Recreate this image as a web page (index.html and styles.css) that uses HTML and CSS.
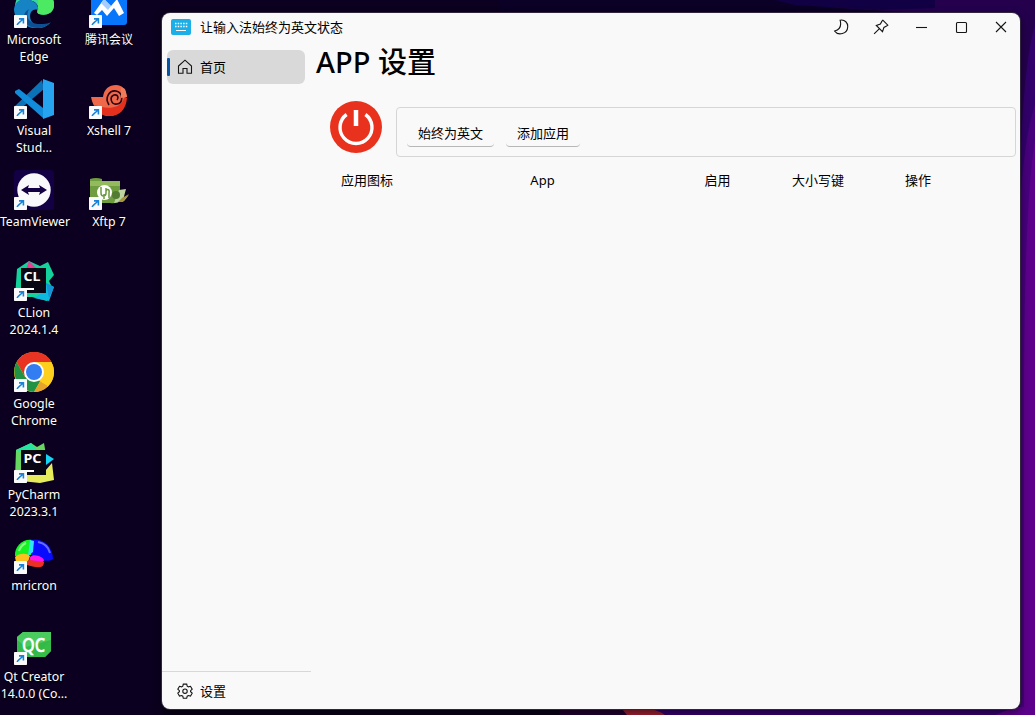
FILE: index.html
```html
<!DOCTYPE html>
<html lang="zh-CN">
<head>
<meta charset="utf-8">
<title>让输入法始终为英文状态</title>
<link rel="stylesheet" href="styles.css">
</head>
<body>
<svg class="defs" width="0" height="0">
  <symbol id="shortcut" viewBox="0 0 13 13"><rect width="13" height="13" rx=".7" fill="#fafafa"/><path d="M3.2 10C3.5 8 5.400 7.800 8.800 4.300M5 3.900h4.400v4.500" fill="none" stroke="#1683d8" stroke-width="1.600"/></symbol>
</svg>
<main class="desktop">
  <svg class="wallpaper" viewBox="0 0 1035 715">
    <rect width="1035" height="715" fill="#0b001f"/>
    <path d="M500 0h535v715H500z" fill="#24004d"/>
    <path d="M500 0h280l60 8 80 5H500z" fill="#0b0025"/>
    <path d="M775 0h160v8l-60 2-80-5z" fill="#110044"/>
    <path d="M1035 25q-12 40-15 150v540h15z" fill="#31006a"/>
    <path d="M1035 105q-12 35-15 110v500h15z" fill="#46007b"/>
    <path d="M1035 140q-10 60-11 230v345h11z" fill="#5c008b"/>
    <path d="M162 707h460v8H162z" fill="#090018"/>
    <path d="M560 709h70v6h-70z" fill="#20002f"/>
    <path d="M622 709h35l8 6h-38z" fill="#9b2031"/>
    <path d="M652 709h363l-20 6H668z" fill="#34006d"/>
    <path d="M1015 707h20v8h-40z" fill="#5c008b"/>
  </svg>
  <section class="icons">
    <div class="item">
      <svg class="pic" viewBox="0 0 40 40"><path d="M1 18C2 5 13-1 24 1c11 2 17 10 16 17-1 8-9 10-15 8-3-1-1-4-1-7-1-6-10-9-16-5-4 2-6 4-7 4z" fill="#3ad4a4"/><path d="M24 1c11 2 17 10 16 17-1 8-9 10-15 8-3-1-1-4-1-7z" fill="#4bea62"/><path d="M0 21c1-8 8-12 16-9 6 2 9 6 8 10-8-3-11 9-4 14 6 4 12 1 17-2-7 8-18 8-26 3C4 34 0 28 0 21z" fill="#1683c5"/><path d="M15 21c-5 10 2 18 21 14-6 6-15 6-21 3-7-4-7-13 0-17z" fill="#0c4f94"/></svg>
      <svg class="link"><use href="#shortcut"/></svg>
      <p class="name">Microsoft<br>Edge</p>
    </div>
    <div class="item">
      <svg class="pic" viewBox="0 0 40 40"><rect x="2" y="1" width="36" height="36" rx="3" fill="#0876fa"/><path d="M5 25 15 11l7 7 6-7 7 14-5 3-5-8-7 8-5-6-5 5z" fill="#fff"/><path d="m15 11 7 7-3 4-7-7z" fill="#a5cbff"/></svg>
      <svg class="link"><use href="#shortcut"/></svg>
      <p class="name cjk">腾讯会议</p>
    </div>
    <div class="item">
      <svg class="pic" viewBox="0 0 40 40"><path d="M1 27 28 1l2 9L5 31l-4-2z" fill="#0b72b8"/><path d="m1 12 4-2 24 19v10L1 14z" fill="#118cda"/><path d="m29 0 11 4v32l-11 4z" fill="#27a4ef"/></svg>
      <svg class="link"><use href="#shortcut"/></svg>
      <p class="name">Visual<br>Stud...</p>
    </div>
    <div class="item">
      <svg class="pic" viewBox="0 0 40 40"><path d="M2 18h12c1-8 6-12 13-12 6 0 9 4 10 7l1 5-3 1c0 10-5 18-15 18C11 37 4 29 2 18z" fill="#ef6849"/><path d="M5 26c8 2 13 4 20 2 6-1 9-5 10-9h3c-1 11-7 18-17 18C12 37 7 32 5 26z" fill="#e5301e"/><path d="M20 26c-5-8 1-15 7-14 8 2 7 12 1 13-6 1-8-7-3-9 4-1 5 3 3 5" fill="none" stroke="#250615" stroke-width="1.600"/><path d="m32 8 4 2 2 8-6 1z" fill="#ef7b59"/></svg>
      <svg class="link"><use href="#shortcut"/></svg>
      <p class="name">Xshell 7</p>
    </div>
    <div class="item">
      <svg class="pic" viewBox="0 0 40 40"><rect width="40" height="40" rx="4" fill="#130044"/><circle cx="20" cy="20" r="16.700" fill="#f9f9fb"/><path d="m7 20 8-5-1 3h12l-1-3 8 5-8 5 1-3H14l1 3z" fill="#130044"/></svg>
      <svg class="link"><use href="#shortcut"/></svg>
      <p class="name wide">TeamViewer</p>
    </div>
    <div class="item">
      <svg class="pic" viewBox="0 0 40 40"><path d="M1 9q6-2 12 0v2h18v20q-3 3-10 2H1z" fill="#709d40"/><path d="M1 11h30v5H1z" fill="#93ba5d"/><path d="m30 20 7-1-3 11 6-5-5 6-10 2z" fill="#bed5a0"/><path d="m33 28 7-4-6 8h-5z" fill="#a79639"/><circle cx="27" cy="25" r="4" fill="#547b34"/><circle cx="15.500" cy="22.500" r="7.500" fill="#fff"/><path d="M12 17v6c0 4 5 4 5 0v-1c0-4 4-3 3 1v5M17 22v-4M15 24v5" fill="none" stroke="#6d9840" stroke-width="1.500"/></svg>
      <svg class="link"><use href="#shortcut"/></svg>
      <p class="name">Xftp 7</p>
    </div>
    <div class="item solo">
      <svg class="pic" viewBox="0 0 40 40"><path d="m3 8 12-8 11 5 8-4 6 13-5 6 3 6-5 14-15-4-17 0z" fill="#14d29b"/><path d="m15 0 8 8H12z" fill="#ed3b93"/><path d="m32 22 8 4-5 14-15-3 12-8z" fill="#0db8de"/><path d="m32 22 8 4-5 11z" fill="#1692d5"/><rect x="7" y="7" width="25" height="25" fill="#080713"/><path d="M12 28h8" stroke="#fff" stroke-width="2"/><text x="9.500" y="20" textLength="17" lengthAdjust="spacingAndGlyphs" class="logo">CL</text></svg>
      <svg class="link"><use href="#shortcut"/></svg>
      <p class="name">CLion<br>2024.1.4</p>
    </div>
    <div class="item solo">
      <svg class="pic" viewBox="0 0 40 40"><circle cx="20" cy="20" r="20" fill="#ffcf1e"/><path d="M2.700 10C11-4 31-3 37.300 10H20L11 25z" fill="#e93423"/><path d="M2.700 10C-4 22 4 38 20 40l9-16-18 1z" fill="#229345"/><path d="m29 25-9 15c6 0 11-3 14-6L24 28z" fill="#e5a42c"/><path d="M20 10h17.300a20 20 0 0 1-3 24l-10-6 5-5-1-9z" fill="#ffcf1e"/><circle cx="20" cy="20" r="10" fill="#fff"/><circle cx="20" cy="20" r="8" fill="#317df1"/></svg>
      <svg class="link"><use href="#shortcut"/></svg>
      <p class="name">Google<br>Chrome</p>
    </div>
    <div class="item solo">
      <svg class="pic" viewBox="0 0 40 40"><path d="m2 7 15-7 6 4 7-4 2 12v20L1 35z" fill="#66d760"/><path d="m2 7 15-7 7 8H5z" fill="#25e6a0"/><path d="m32 11 8 5-8 6z" fill="#16d4f3"/><path d="m31 28 7-8 2 17-14 3-19-2 2-8z" fill="#e6ec5b"/><rect x="7" y="7" width="25" height="25" fill="#080713"/><path d="M12 28h8" stroke="#fff" stroke-width="2"/><text x="9.500" y="20" textLength="18" lengthAdjust="spacingAndGlyphs" class="logo">PC</text></svg>
      <svg class="link"><use href="#shortcut"/></svg>
      <p class="name">PyCharm<br>2023.3.1</p>
    </div>
    <div class="item solo">
      <svg class="pic" viewBox="0 0 40 40"><path d="M1 22C0 12 10 4 18 6l-1 15z" fill="#16f323"/><path d="M17 6c11-3 22 6 22 19-5 4-14 1-22-4z" fill="#080bfc"/><path d="m16 6 4 1-1 11-5 4z" fill="#2de6f4"/><path d="M1 23c4-4 12-4 15-1l-2 6H2z" fill="#ffc01f"/><path d="M16 23c4-4 14 0 14 4l-4 3-11-3z" fill="#fa16f0"/><path d="m11 28 5-2 14 2c0 8-10 5-17 3z" fill="#ed3024"/><path d="M5 17q2-6 7-8" fill="none" stroke="#89ff85" stroke-width="2"/><path d="M24 8q10 2 12 11" fill="none" stroke="#666bff" stroke-width="2"/></svg>
      <svg class="link"><use href="#shortcut"/></svg>
      <p class="name">mricron</p>
    </div>
    <div class="item solo">
      <svg class="pic" viewBox="0 0 40 40"><path d="M9 7h28v19l-6 6H3V12z" fill="#32b947"/><path d="M9 7h28v8L12 22 3 15v-3z" fill="#4acb5d"/><path d="m20 32 17-17v11l-6 6z" fill="#35bc49"/><text x="8" y="26.500" textLength="23" lengthAdjust="spacingAndGlyphs" class="qc">QC</text></svg>
      <svg class="link"><use href="#shortcut"/></svg>
      <p class="name">Qt Creator<br>14.0.0 (Co...</p>
    </div>
  </section>

  <section class="window">
    <header class="titlebar">
      <svg class="keyboard" viewBox="0 0 20 16"><rect width="20" height="16" rx="2" fill="#1caee6"/><path d="M4 4.500h12.500M4 7.500h12.500" stroke="#fff" stroke-width="1.500" stroke-dasharray="1.500 1.200"/><path d="M5 11.500h10" stroke="#fff"/></svg>
      <h1 class="title">让输入法始终为英文状态</h1>
      <div class="controls">
        <svg viewBox="0 0 16 16"><path d="M7.100 1.200C12 .3 15 4 14.700 8c-.3 7-9.500 9-13 4.100C5.500 10.900 9 8 7.100 1.200z"/></svg>
        <svg viewBox="0 0 16 16"><path d="m9.800 1.200 5 5-1.200.9-2.700 1.400-1.400 4.200-6.200-6.200 4.100-1.400 1.400-2.700zM6.200 9.800l-5.100 5"/></svg>
        <svg viewBox="0 0 16 16"><path d="M3 8.500h11"/></svg>
        <svg viewBox="0 0 16 16"><rect x="3.500" y="3.500" width="10" height="10" rx="1"/></svg>
        <svg viewBox="0 0 16 16"><path d="m3 3 10 10M13 3 3 13"/></svg>
      </div>
    </header>
    <div class="body">
      <nav class="sidebar">
        <a class="nav active"><svg class="navicon" viewBox="0 0 16 16"><path d="M1.500 7 8 1.200 14.500 7v7.300H10V9.500H6v4.800H1.500z"/></svg>首页</a>
        <a class="nav settings"><svg class="navicon" viewBox="0 0 16 16"><path d="m6.300 1.100 3.400 0 .5 2.100 1.200.7 2.100-.6 1.700 2.900-1.600 1.500v1l1.600 1.500-1.700 2.900-2.100-.6-1.200.7-.5 2.100H6.300l-.5-2.100-1.200-.7-2.100.6L.8 10.200l1.600-1.500v-1L.8 6.200l1.700-2.900 2.100.6 1.200-.7z"/><circle cx="8" cy="8.200" r="2.200"/></svg>设置</a>
      </nav>
      <article class="content">
        <h2 class="heading">APP 设置</h2>
        <div class="tools">
          <svg class="power" viewBox="0 0 52 52"><circle cx="26" cy="26" r="26" fill="#e9321e"/><path d="M16.600 13.500A16 16 0 1 0 35.400 13.500" fill="none" stroke="#fff" stroke-width="3.400"/><path d="M26 9v16" stroke="#fff" stroke-width="4.500"/></svg>
          <div class="bar"><button class="button">始终为英文</button><button class="button">添加应用</button></div>
        </div>
        <div class="table"><span>应用图标</span><span>App</span><span>启用</span><span>大小写键</span><span>操作</span></div>
      </article>
    </div>
  </section>
</main>
</body>
</html>
```
FILE: styles.css
```css
* { box-sizing: border-box; }
body { margin: 0; font-family: "Noto Sans", "Noto Sans CJK SC", sans-serif; }
.defs { position: absolute; }
.desktop { position: relative; width: 1035px; height: 715px; overflow: hidden; background: #0b001f; }
.wallpaper { position: absolute; inset: 0; width: 100%; height: 100%; }
.icons { position: relative; width: 150px; margin-left: -4px; margin-top: -12px; display: grid; grid-template-columns: 75px 75px; grid-auto-rows: 91px; }
.item { position: relative; display: flex; flex-direction: column; align-items: center; }
.solo { grid-column: 1; }
.pic { width: 40px; height: 40px; flex: none; }
.link { position: absolute; left: 18px; top: 27px; width: 13px; height: 13px; }
.name { margin: 3px 0 0; padding-left: 1px; color: #fff; font-size: 12.3px; line-height: 17px; text-align: center; white-space: nowrap; text-shadow: 0 1px 2px #000; }
.wide { padding-left: 3px; }
.cjk { margin-top: 2px; font-family: "Noto Sans CJK SC", sans-serif; font-size: 12px; }
.logo { font: bold 13px "Noto Sans", sans-serif; fill: #fff; }
.qc { font: 500 19px "Noto Sans", sans-serif; fill: #fff; stroke: #fff; stroke-width: .5; }
.window { position: absolute; left: 162px; top: 13px; width: 858px; height: 696px; display: flex; flex-direction: column; border-radius: 8px; background: #f9f9f9; color: #000; font-size: 13px; box-shadow: 0 0 0 1px #32263e, 0 3px 9px #0008; }
.titlebar { height: 28px; flex: none; display: flex; align-items: center; padding-left: 9px; }
.keyboard { width: 20px; height: 16px; }
.title { margin: 0 0 1px 9px; font: 13px/20px "Noto Sans CJK SC", sans-serif; }
.controls { margin-left: auto; display: flex; gap: 24px; padding-right: 11px; }
.controls svg, .navicon { width: 16px; height: 16px; fill: none; stroke: #151515; stroke-width: 1.1; }
.body { flex: 1; display: flex; min-height: 0; }
.sidebar { width: 149px; display: flex; flex-direction: column; justify-content: space-between; padding-top: 9px; }
.nav { height: 34px; display: flex; align-items: center; gap: 7px; padding-left: 7px; font-family: "Noto Sans CJK SC", sans-serif; line-height: 20px; }
.active { width: 138px; margin-left: 5px; border-radius: 6px; background: #d9d9d9; }
.active::before { content: ""; width: 3px; height: 18px; margin: 0 0 0 -7px; border-radius: 1px; background: #0455a5; }
.settings { height: 38px; padding-left: 15px; border-top: 1px solid #d8d8d8; }
.content { flex: 1; padding-right: 4px; }
.heading { height: 60px; margin: 0 0 0 5px; font-size: 29px; font-weight: 500; line-height: 41px; white-space: nowrap; }
.tools { display: flex; gap: 14px; padding-left: 19px; }
.power { width: 52px; height: 52px; flex: none; }
.bar { flex: 1; height: 50px; margin-top: 6px; padding: 11px 10px; display: flex; gap: 12px; border: 1px solid #d6d6d6; border-radius: 4px; }
.button { height: 28px; padding: 0 11px; border: 0; border-bottom: 1px solid #b7b7b7; border-radius: 4px; background: #f9f9f9; color: #000; font: 13px/20px "Noto Sans CJK SC", sans-serif; white-space: nowrap; }
.table { display: grid; grid-template-columns: 112px 239px 111px 90px 110px; margin-top: 13px; text-align: center; line-height: 20px; }
```
